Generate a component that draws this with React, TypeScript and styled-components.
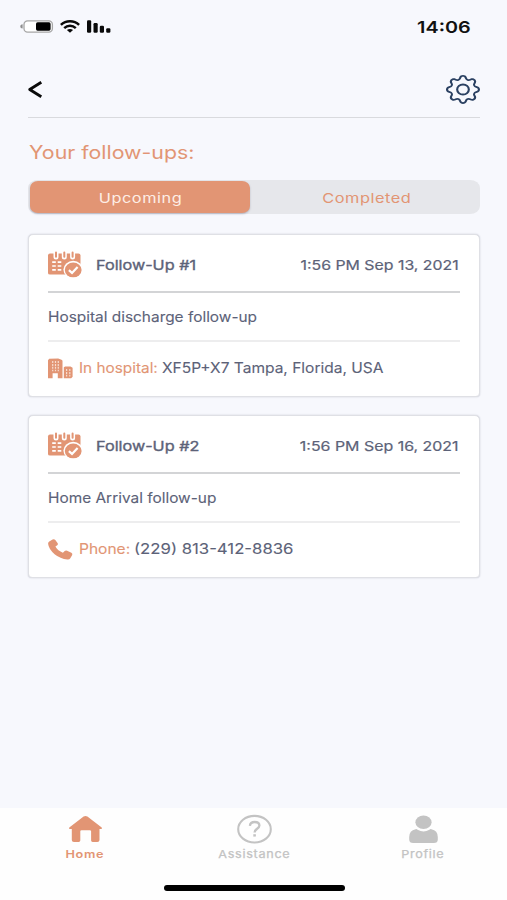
import React from "react";
import styled, { createGlobalStyle } from "styled-components";
import { BsGear } from "react-icons/bs";

const orange = "#e29574";
const slate = "#5c6278";
const grey = "#c3c3c3";

const GlobalStyle = createGlobalStyle`
  * { box-sizing: border-box; }
  body { margin: 0; background: #f7f8fd; font-family: Inter, "Liberation Sans", sans-serif; }
  svg { display: block; flex: none; overflow: visible; }
  h1, h2, p { margin: 0; font-weight: 400; }
`;

const Screen = styled.main`
  display: flex;
  flex-direction: column;
  width: 507px;
  height: 900px;
  overflow: hidden;
  background: #f7f8fd;
`;

/* Wide lettering: the glyphs are widened from the side given by $origin. */
const Wide = styled.span<{ $scale: number; $origin?: string }>`
  display: inline-block;
  white-space: pre;
  transform: scaleX(${(p) => p.$scale});
  transform-origin: ${(p) => p.$origin ?? "left"} center;
`;

const StatusBar = styled.header`
  display: flex;
  align-items: center;
  justify-content: space-between;
  height: 53px;
  padding: 0 36px 0 20px;
  flex: none;
`;
const StatusIcons = styled.div`
  display: flex;
  align-items: center;
  gap: 7px;
`;
const Clock = styled.div`
  font-size: 16.5px;
  font-weight: 600;
  line-height: 20px;
  color: #111;
`;

const Toolbar = styled.nav`
  display: flex;
  align-items: center;
  justify-content: space-between;
  height: 65px;
  margin: 0 27px 0 28px;
  border-bottom: 1.5px solid #d9dade;
  flex: none;
`;
const IconButton = styled.button`
  display: flex;
  padding: 0;
  margin-top: 9px;
  border: 0;
  background: none;
  color: #2b4162;
`;
const GearIcon = styled(BsGear)`
  width: 34px;
  height: 29px;
`;

const Heading = styled.h1`
  height: 62px;
  padding: 24px 0 0 29px;
  font-size: 18px;
  line-height: 22px;
  color: ${orange};
  flex: none;
`;

const Tabs = styled.div`
  display: grid;
  grid-template-columns: 220px 1fr;
  gap: 2px;
  height: 34px;
  margin: 0 27px 0 28px;
  padding: 1px 0 1px 2px;
  border-radius: 10px / 8px;
  background: #e6e7eb;
  flex: none;
`;
const Tab = styled.button<{ $active?: boolean }>`
  display: flex;
  align-items: center;
  justify-content: center;
  padding: 1px 0 0 2px;
  border: 0;
  border-radius: 8px / 7px;
  font: 400 13.5px/18px Inter, sans-serif;
  letter-spacing: 0.45px;
  color: ${(p) => (p.$active ? "#fdeee6" : orange)};
  background: ${(p) => (p.$active ? orange : "transparent")};
  box-shadow: ${(p) => (p.$active ? "0 1px 2px rgba(80, 80, 110, 0.35)" : "none")};
`;

const CardList = styled.section`
  display: flex;
  flex-direction: column;
  gap: 18px;
  flex: 1;
  padding: 20px 27px 0 28px;
`;
const Card = styled.article`
  display: flex;
  flex-direction: column;
  height: 163px;
  padding: 0 20px;
  border: 1px solid #dfe0e5;
  border-radius: 5px 5px 4px 4px;
  background: #fff;
  box-shadow: 0 0 1.5px rgba(70, 75, 100, 0.3);
  color: ${slate};
  font-size: 14px;
  line-height: 18px;
`;
const CardHead = styled.div`
  display: flex;
  align-items: center;
  height: 58px;
  margin: 0 -1px;
  padding: 3px 1px 0 0;
  border-bottom: 2px solid #d3d4d6;
`;
const CardTitle = styled.h2`
  flex: 1;
  padding-left: 13.5px;
  font-size: 13.5px;
  line-height: 18px;
  -webkit-text-stroke: 0.35px;
`;
const CardDate = styled.time`
  font-size: 13px;
  -webkit-text-stroke: 0.2px;
`;
const CardText = styled.p`
  height: 49px;
  margin: 0 -1px;
  padding-top: 15px;
  border-bottom: 2px solid #ededee;
  -webkit-text-stroke: 0.1px;
`;
const CardFoot = styled.div`
  display: flex;
  align-items: center;
  height: 52px;
  margin-left: -1px;
  -webkit-text-stroke: 0.1px;
`;
const FootLabel = styled.span<{ $width: number }>`
  width: ${(p) => p.$width}px;
  margin-left: 6px;
  color: ${orange};
`;

const BottomNav = styled.footer`
  display: flex;
  flex-direction: column;
  align-items: center;
  height: 92px;
  background: #fefefe;
  flex: none;
`;
const NavItems = styled.div`
  display: grid;
  grid-template-columns: repeat(3, 169px);
  height: 77px;
`;
const NavItem = styled.a<{ $active?: boolean }>`
  display: flex;
  flex-direction: column;
  align-items: center;
  gap: 4px;
  padding: 7px 0 0 1px;
  font-size: 11px;
  line-height: 14px;
  letter-spacing: 0.6px;
  font-weight: ${(p) => (p.$active ? 600 : 400)};
  -webkit-text-stroke: ${(p) => (p.$active ? "0" : "0.25px")};
  color: ${(p) => (p.$active ? orange : grey)};
`;
const HomeIndicator = styled.div`
  width: 181px;
  height: 6px;
  margin-left: 1px;
  border-radius: 3px;
  background: #000;
`;

const BatteryIcon = () => (
  <svg width="33" height="13" viewBox="0 0 33 13" fill="none">
    <rect x="4" y="0.8" width="28.4" height="11.4" rx="3.6" fill="#fff" stroke="#a6a6a6" strokeWidth="1.3" />
    <path d="M2.6 4.3v4.2C1.2 8.3.3 7.500.3 6.400s.9-1.900 2.300-2.100z" fill="#8e8e8e" />
    <rect x="16" y="2.3" width="14.6" height="8.4" rx="1.6" fill="#000" />
  </svg>
);
const WifiIcon = () => (
  <svg width="20" height="13" viewBox="0 0 20 13" fill="none" stroke="#0a0a0a" strokeWidth="2.5">
    <path d="M.9 4.8C6-.1 14-.1 19.1 4.8" />
    <path d="M4.2 8.100c3.300-3 8.300-3 11.600 0" />
    <path d="M6.900 10.100c1.800-1.500 4.400-1.500 6.200 0L10 12.800z" fill="#0a0a0a" stroke="none" />
  </svg>
);
const SignalIcon = () => (
  <svg width="24" height="13" viewBox="0 0 24 13" fill="#0a0a0a">
    <rect x="0" y="0.3" width="4.2" height="12.4" rx="1.2" />
    <rect x="6.5" y="3" width="4.2" height="9.7" rx="1.2" />
    <rect x="12.8" y="5.7" width="4.2" height="7" rx="1.2" />
    <rect x="19.2" y="8.2" width="4.2" height="4.5" rx="1.2" />
  </svg>
);
const BackIcon = () => (
  <svg width="14" height="17" viewBox="0 0 14 17" fill="none" stroke="#0a0a0a" strokeWidth="2.8">
    <path d="M13.300 1.200 1.700 8.500l11.600 7.300" strokeLinejoin="round" />
  </svg>
);
const CalendarIcon = () => (
  <svg width="34" height="27" viewBox="0 0 34 27">
    <path d="M2 2.500h28.500q2 0 2 2V22q0 1.600-2 1.600H2q-2 0-2-1.600V4.500q0-2 2-2z" fill={orange} />
    <g fill="none" strokeLinecap="round">
      <g stroke="#fff" strokeWidth="5">
        <path d="M8 2v4M16.300 2v4M24.600 2v4" />
      </g>
      <g stroke={orange} strokeWidth="2">
        <path d="M8 1.500v4.300M16.300 1.500v4.300M24.600 1.500v4.300" />
      </g>
    </g>
    <path d="M4.200 11.200h3.600M9.700 11.200h3.600M4.200 15h3.600M9.700 15h3.600M4.200 18.800h3.600M9.700 18.800h3.600" stroke="#fff" strokeWidth="1.700" />
    <ellipse cx="25.200" cy="18.600" rx="9.800" ry="8.800" fill="#fff" />
    <ellipse cx="25.200" cy="18.900" rx="8.400" ry="7.400" fill={orange} />
    <path d="m20.900 19.200 3.100 2.700 5.600-5.900" fill="none" stroke="#fff" strokeWidth="2.200" />
  </svg>
);
const BuildingIcon = () => (
  <svg width="25" height="21" viewBox="0 0 25 21">
    <path d="M0 20.300V2.200L1.200.8l9-.3 3.300 1.200q1 .4 1 1.500v17.100H9.800v-5H4.600v5z" fill={orange} />
    <path d="M15.800 20.300V9.200l1.400-.8h5.300l2.100 1.400v9l-1.400 1.500z" fill={orange} />
    <path d="M4.700 3v10.300M7.500 3v10.300M10.300 3v10.300M18.600 11v7.500M21.800 11v7.500" stroke="#f7dccf" strokeWidth="1.200" strokeDasharray="2 .9" fill="none" />
  </svg>
);
const PhoneIcon = () => (
  <svg width="25" height="21" viewBox="0 0 25 21">
    <path
      d="M1.200 2.600 4.600.5q1.600-.8 2.700.6l2.400 3.200q.7 1.100-.4 1.900L7.400 7.600q2.400 4.200 7.500 6.100l1.800-1.600q1-.9 2.400-.3l4.300 2q1.400.8.8 2.100l-1.900 3.300q-.8 1.400-2.900 1.200Q12.300 19.800 6.600 15.200.6 10 .1 4.800 0 3.400 1.200 2.600z"
      fill={orange}
    />
  </svg>
);
const HomeIcon = () => (
  <svg width="35" height="28" viewBox="0 0 35 28">
    <path
      d="M15.600 1.500q1.900-1.200 3.800 0l14.300 11q1 1.200-.6 1.500h-1.600v11q0 2-2.200 2h-4.700q-1.500 0-1.500-1.400v-9.300q0-1.100-1.300-1.100h-8.200q-1.300 0-1.300 1.100v9.300q0 1.400-1.600 1.400H6q-2.200 0-2.200-2V14H1.900q-1.600-.3-.6-1.500z"
      fill={orange}
    />
  </svg>
);
const HelpIcon = () => (
  <svg width="35" height="28" viewBox="0 0 35 28" fill="none" stroke={grey}>
    <ellipse cx="17.500" cy="14.200" rx="16.300" ry="13.300" strokeWidth="2.100" />
    <path d="M12.900 10.800c.2-2.500 2.100-3.800 4.800-3.800 2.800 0 4.700 1.400 4.700 3.600 0 3.200-4.800 3.100-4.800 6.800" strokeWidth="2.300" />
    <path d="M17.600 19.200v2.400" strokeWidth="2.600" />
  </svg>
);
const ProfileIcon = () => (
  <svg width="29" height="28" viewBox="0 0 29 28" fill={grey}>
    <ellipse cx="14.500" cy="7.200" rx="8.100" ry="6.800" />
    <path d="M6.600 14.200q1-.3 2 .5 5.900 3.500 11.800 0 1-.8 2-.5Q28.800 15.500 28.800 22v2.500q0 3.500-4 3.500H4.200q-4 0-4-3.500V22q0-6.500 6.400-7.800z" />
  </svg>
);

type FollowUp = {
  title: string;
  date: string;
  dateScale: number;
  text: string;
  icon: React.ReactNode;
  label: string;
  labelWidth: number;
  labelScale: number;
  detail: string;
  detailScale: number;
};

const followUps: FollowUp[] = [
  {
    title: "Follow-Up #1", date: "1:56 PM Sep 13, 2021", dateScale: 1.22,
    text: "Hospital discharge follow-up", icon: <BuildingIcon />,
    label: "In hospital:", labelWidth: 83, labelScale: 1.095,
    detail: "XF5P+X7 Tampa, Florida, USA", detailScale: 1.108,
  },
  {
    title: "Follow-Up #2", date: "1:56 PM Sep 16, 2021", dateScale: 1.225,
    text: "Home Arrival follow-up", icon: <PhoneIcon />,
    label: "Phone:", labelWidth: 55, labelScale: 1.11,
    detail: "(229) 813-412-8836", detailScale: 1.195,
  },
];

export default function App() {
  return (
    <Screen>
      <GlobalStyle />
      <StatusBar>
        <StatusIcons>
          <BatteryIcon />
          <WifiIcon />
          <SignalIcon />
        </StatusIcons>
        <Clock><Wide $scale={1.2} $origin="right">14:06</Wide></Clock>
      </StatusBar>
      <Toolbar>
        <IconButton aria-label="Back"><BackIcon /></IconButton>
        <IconButton aria-label="Settings"><GearIcon preserveAspectRatio="none" /></IconButton>
      </Toolbar>
      <Heading><Wide $scale={1.185}>Your follow-ups:</Wide></Heading>
      <Tabs>
        <Tab $active><Wide $scale={1.21} $origin="center">Upcoming</Wide></Tab>
        <Tab><Wide $scale={1.21} $origin="center">Completed</Wide></Tab>
      </Tabs>
      <CardList>
        {followUps.map((f) => (
          <Card key={f.title}>
            <CardHead>
              <CalendarIcon />
              <CardTitle><Wide $scale={1.2}>{f.title}</Wide></CardTitle>
              <CardDate><Wide $scale={f.dateScale} $origin="right">{f.date}</Wide></CardDate>
            </CardHead>
            <CardText><Wide $scale={1.1}>{f.text}</Wide></CardText>
            <CardFoot>
              {f.icon}
              <FootLabel $width={f.labelWidth}><Wide $scale={f.labelScale}>{f.label}</Wide></FootLabel>
              <Wide $scale={f.detailScale}>{f.detail}</Wide>
            </CardFoot>
          </Card>
        ))}
      </CardList>
      <BottomNav>
        <NavItems>
          <NavItem $active><HomeIcon /><Wide $scale={1.15} $origin="center">Home</Wide></NavItem>
          <NavItem><HelpIcon /><Wide $scale={1.15} $origin="center">Assistance</Wide></NavItem>
          <NavItem><ProfileIcon /><Wide $scale={1.15} $origin="center">Profile</Wide></NavItem>
        </NavItems>
        <HomeIndicator />
      </BottomNav>
    </Screen>
  );
}
